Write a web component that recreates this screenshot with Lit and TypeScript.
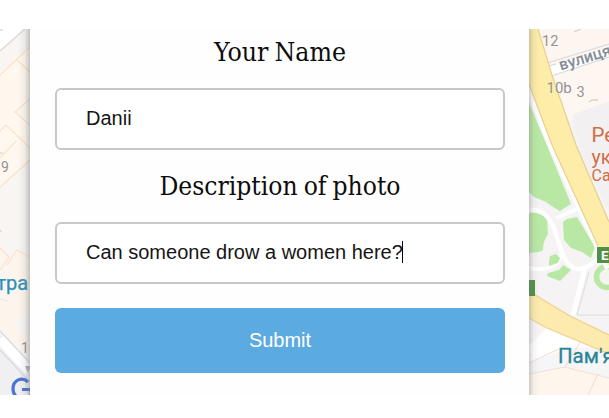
import { LitElement, html, svg, css } from "lit";
import { customElement, property } from "lit/decorators.js";

@customElement("map-backdrop")
class MapBackdrop extends LitElement {
  static styles = css`
    :host { display: block; }
    .map { display: block; width: 609px; height: 366px; }
    .label { font-family: Roboto, sans-serif; }
    .soft { fill: #929497; }
    .transit { fill: #278493; }
    .place { fill: #cf6f45; }
  `;

  private left() {
    return svg`
      <path d="M0 29H30V395H0Z" fill="#f8f5f2"/>
      <path d="M0 73L30 47V160L0 187Z" fill="#fef8ef"/>
      <path d="M0 29H24L0 50Z" fill="#fff"/>
      <path d="M0 51L25 29" stroke="#dcdcdc" stroke-width="1.5" fill="none"/>
      <g stroke="#fbe2c8" stroke-width="1.2" fill="none">
        <path d="M0 75L30 47M16 59L30 72M30 99L15 112L30 125M0 131L6 125L30 148M0 158L16 141M0 187L30 160"/>
        <path d="M0 248L9 257L0 270M0 299L12 302L16 283L30 270M7 265L17 250L30 257M4 327L30 305M4 327L26 347"/>
      </g>
      <path d="M0 249L7 257L0 268ZM8 265L17 251L30 258V310L12 324L30 343V355L4 331L0 326V303L12 300Z" fill="#fdf5ec"/>
      <path d="M0 335L30 366V395H0Z" fill="#f0f0f3"/>
      <path d="M0 339L30 371" stroke="#fff" stroke-width="10"/>
      <path d="M0 331L30 363M0 350L30 382" stroke="#d9dade" stroke-width="1.3"/>
      <path d="M0 30h3M0 153h3M0 231h2" stroke="#e0dcd8" stroke-width="1.5"/>
      <text class="label soft" x="1" y="171.500" font-size="14">9</text>
      <text class="label" x="-3.500" y="290" font-size="20" fill="#2a90b8" stroke="#2a90b8" stroke-width=".25">тра</text>
      <text class="label soft" x="21" y="352.500" font-size="14">1</text>
      <path d="M25 366h6l-3 7z" fill="#aab4c6"/>
      <path d="M28 382C22 376 13 380 13 389C13 393 15 396 18 398" stroke="#4a72d8" stroke-width="3.200" fill="none"/>
      <path d="M22 389.500H31V395" stroke="#4a72d8" stroke-width="3" fill="none"/>
    `;
  }

  private right() {
    return svg`
      <path d="M529 29H609V395H529Z" fill="#f5f3f3"/>
      <path d="M538 29H609V52L551 72Z" fill="#fdf5ef"/>
      <path d="M551 76L609 57V101L574 117L567 124Z" fill="#fdf6f1"/>
      <path d="M548 67L609 48V57L551 76Z" fill="#fff"/>
      <path d="M544 64L609 44M551 76L609 57M529 72L556 64" stroke="#d7dbe2" stroke-width="1.3"/>
      <path d="M589 102l3-2 6 0M602 113l7-1M574 32l7-3" stroke="#ddd2c8" stroke-width="1.3" fill="none"/>
      <path d="M572 115L609 101V210L583 160Z" fill="#f2f0f1"/>

      <path d="M529 103L548 148L571 204L560 211L553 207L546 202L534 197L529 192Z" fill="#b9e8a5"/>
      <path d="M563 222L567 219L577 217L595 247L591 258L582 252L571 248L564 240Z" fill="#b9e8a5"/>
      <path d="M529 213C537 212 544 215 547 219L548 234C546 238 543 241 543 250C540 253 535 252 529 253Z" fill="#b9e8a5"/>
      <path d="M529 210C546 208 553 223 557 237C561 250 565 266 577 269C584 270 590 266 597 260" stroke="#fff" stroke-width="4.500" fill="none"/>
      <path d="M556 218L577 209M529 268C543 271 561 269 562 250" stroke="#fff" stroke-width="4" fill="none"/>
      <path d="M549 262L550 256L556 254L560 258L558 263L549 266Z" fill="#b9e8a5"/>
      <path d="M548 273L559 270L563 265L571 270L560 281L547 276Z" fill="#b9e8a5"/>
      <circle cx="607" cy="277" r="10.500" fill="#f4f5f1" stroke="#b9e8a5" stroke-width="5.500"/>
      <path d="M573 315L585 268" stroke="#fff" stroke-width="5"/>
      <path d="M577 315L589 272M577 315L609 315" stroke="#dadcdf" stroke-width="1" fill="none"/>

      <path d="M529 320L556 332L595 348L609 354V395H529Z" fill="#f6f4f5"/>
      <path d="M529 345L549 327L595 349L609 354V369L529 374Z" fill="#f6f5f7"/>
      <path d="M529 346L547 328L590 347L568 348L530 363Z" fill="#fff"/>
      <path d="M529 373L570 366L609 378V395H529Z" fill="#fef6ed"/>
      <path d="M529 363L559 349M529 374L565 367L581 341M565 367L609 378M588 395L598 374" stroke="#efe0da" stroke-width="1.2" fill="none"/>

      <path d="M529 86L552 145L598 245L609 268" stroke="#fff" stroke-width="8" fill="none"/>
      <path d="M529 29H538L552 75L576 145L609 222V266L598 246L552 145L529 84Z" fill="#fdeda9"/>
      <path d="M538 29L552 75L576 145L609 222M529 84L552 145L598 246" stroke="#e9cf91" stroke-width="1.2" fill="none"/>
      <path d="M529 291L545 301L570 316L609 335V354L595 348L547 328L529 318Z" fill="#fcebae"/>
      <path d="M529 291L545 301L570 316L609 335M529 318L547 328L595 348L609 354" stroke="#f1d18c" stroke-width="1.2" fill="none"/>

      <path d="M529 280h6v16h-6z" fill="#519044"/>
      <path d="M597 247h12v16h-12z" fill="#519044"/>
      <text class="label" x="601" y="260" font-size="13.500" font-weight="700" fill="#fff">E</text>
      <text class="label soft" x="542" y="45.500" font-size="14.500">12</text>
      <text class="label soft" x="546.500" y="93" font-size="15">10b</text>
      <text class="label soft" x="576.500" y="97" font-size="14.500">3</text>
      <text class="label" x="561" y="70.500" font-size="16" font-weight="500" fill="#858c97" transform="rotate(-17 561 71)">вулиця</text>
      <text class="label place" x="591.500" y="142" font-size="20.500">Ре</text>
      <text class="label place" x="591.500" y="163.500" font-size="19.500">ук</text>
      <text class="label place" x="591.500" y="181" font-size="16">Са</text>
      <text class="label transit" x="558" y="363" font-size="20.500" stroke="#278493" stroke-width=".3">Пам'я</text>
    `;
  }

  render() {
    return html`
      <svg class="map" viewBox="0 29 609 366" aria-hidden="true">
        <defs>
          <linearGradient id="shadeLeft" x1="0" x2="1" y1="0" y2="0">
            <stop offset="0" stop-color="#777" stop-opacity="0"/>
            <stop offset=".55" stop-color="#777" stop-opacity=".1"/>
            <stop offset="1" stop-color="#777" stop-opacity=".42"/>
          </linearGradient>
          <linearGradient id="shadeRight" x1="1" x2="0" y1="0" y2="0">
            <stop offset="0" stop-color="#777" stop-opacity="0"/>
            <stop offset=".55" stop-color="#777" stop-opacity=".08"/>
            <stop offset="1" stop-color="#777" stop-opacity=".35"/>
          </linearGradient>
        </defs>
        ${this.left()}${this.right()}
        <rect x="18" y="29" width="12" height="366" fill="url(#shadeLeft)"/>
        <rect x="529" y="29" width="10" height="366" fill="url(#shadeRight)"/>
      </svg>
    `;
  }
}

@customElement("slab-heading")
class SlabHeading extends LitElement {
  @property() text = "";
  @property({ type: Number }) span = 0;

  static styles = css`
    :host { display: block; height: 38px; }
    .line { display: block; width: 100%; height: 38px; }
    .text {
      font: 26.5px "DejaVu Serif Condensed", "DejaVu Serif", serif;
      font-stretch: condensed;
      word-spacing: -1.5px;
      fill: #0c0c0c;
    }
  `;

  render() {
    return html`<svg class="line" viewBox="0 0 450 38" role="heading">
      <text class="text" x=${225 - this.span / 2} y="28" textLength=${this.span}
        lengthAdjust="spacingAndGlyphs">${this.text}</text>
    </svg>`;
  }
}

@customElement("app-root")
class AppRoot extends LitElement {
  static styles = css`
    :host { display: block; height: 418px; background: #fff; overflow: hidden; }
    .stage { display: grid; padding-top: 29px; }
    .back, .card { grid-area: 1 / 1; }
    .card {
      z-index: 1;
      box-sizing: border-box;
      width: 499px;
      height: 366px;
      margin-left: 30px;
      padding: 4px 24px 0 25px;
      background: #fefefe;
      font-family: "Liberation Sans", Arial, sans-serif;
      font-size: 20px;
    }
    .field {
      display: flex;
      align-items: center;
      box-sizing: border-box;
      height: 62px;
      margin: 17px 0;
      padding: 0 29px 2px;
      border: 2px solid #c8c8c8;
      border-radius: 6px;
      background: #fff;
      color: #151515;
    }
    .caret { width: 1px; height: 22px; margin-left: -1px; background: #000; }
    .submit {
      display: block;
      width: 450px;
      height: 65px;
      margin: 24px 0 0;
      padding: 0;
      border: 0;
      border-radius: 6px;
      background: #5cabe0;
      color: #fff;
      font: inherit;
    }
  `;

  render() {
    return html`
      <div class="stage">
        <map-backdrop class="back"></map-backdrop>
        <form class="card">
          <slab-heading text="Your Name" span="132"></slab-heading>
          <div class="field">Danii</div>
          <slab-heading text="Description of photo" span="241"></slab-heading>
          <div class="field">Can someone drow a women here?<span class="caret"></span></div>
          <button class="submit" type="button">Submit</button>
        </form>
      </div>
    `;
  }
}
